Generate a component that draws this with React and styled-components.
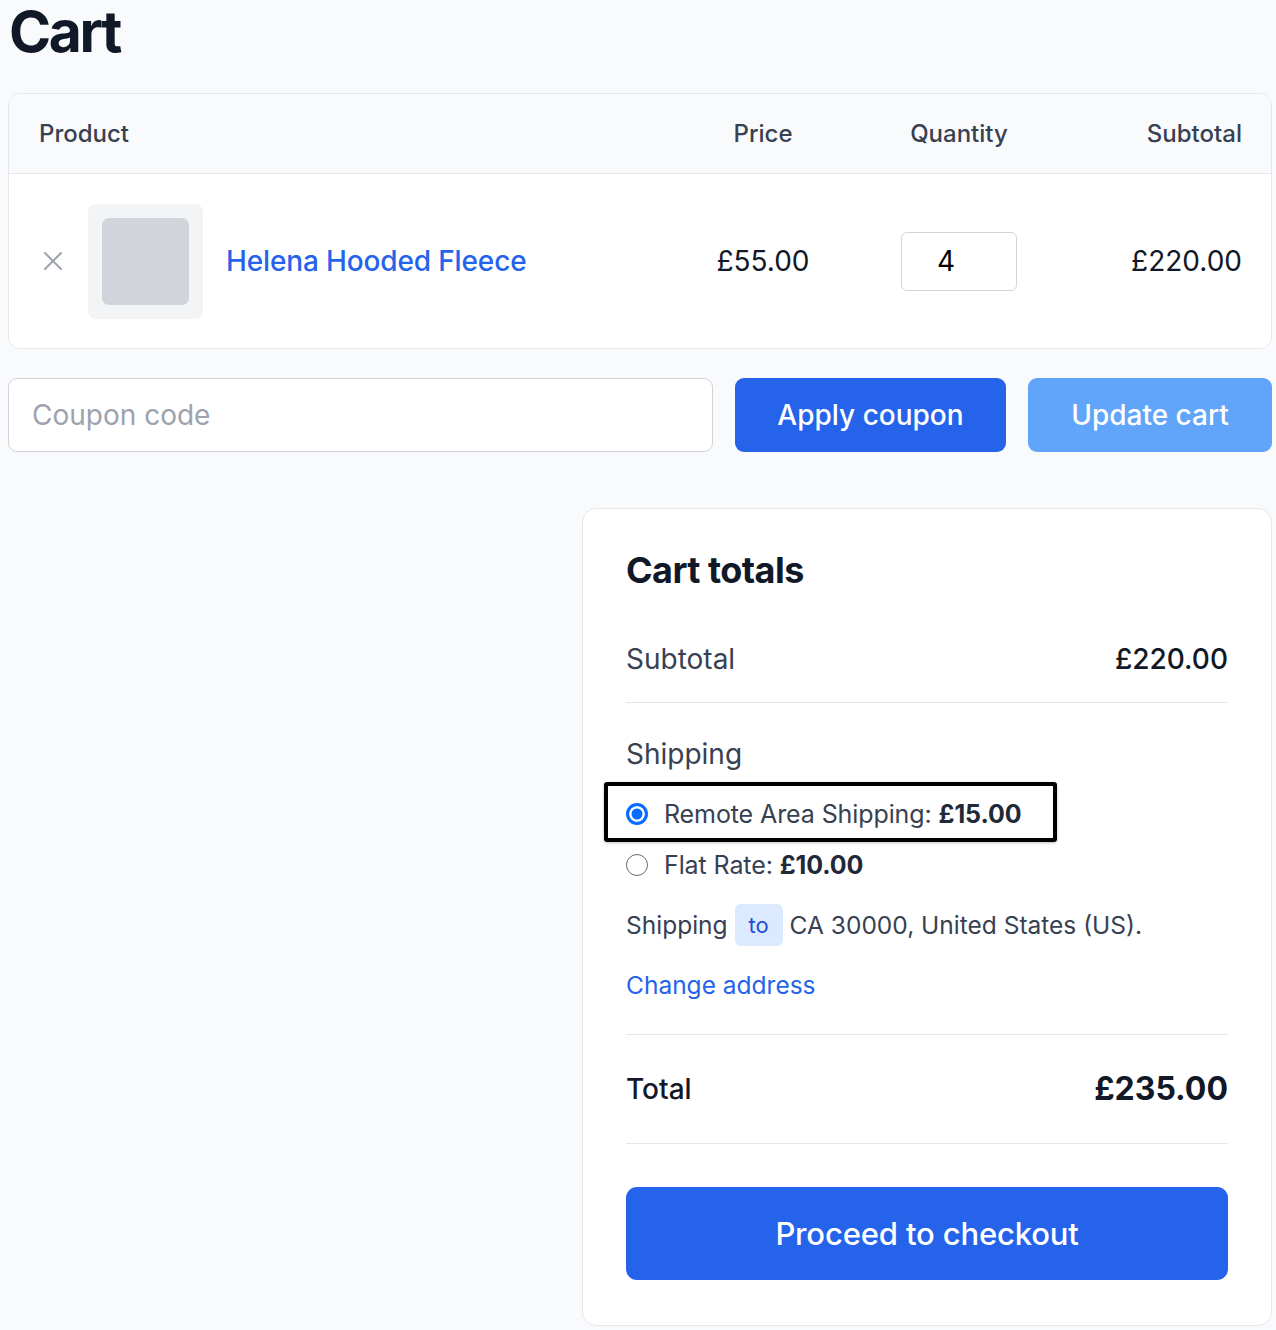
import React from "react";
import styled, { createGlobalStyle } from "styled-components";

const Global = createGlobalStyle`
  html, body { margin: 0; padding: 0; background: #f9fafb; }
  body { font-family: Inter, "Noto Sans", sans-serif; color: #111827; -webkit-font-smoothing: antialiased; }
  * { box-sizing: border-box; }
`;

const Page = styled.div`
  padding: 0 4px 0 8px;
  width: 1276px;
`;

const Title = styled.h1`
  margin: 0;
  font-size: 57px;
  line-height: 64px;
  font-weight: 700;
  letter-spacing: -0.042em;
  color: #111827;
  padding-left: 1px;
`;

const TableCard = styled.div`
  margin-top: 29px;
  background: #fff;
  border: 1px solid #e5e7eb;
  border-radius: 12px;
  overflow: hidden;
`;

const Row = styled.div`
  display: grid;
  grid-template-columns: 1fr 160px 232px 167px;
  align-items: center;
  padding: 0 29px 0 30px;
  height: ${(p) => p.$h}px;
  background: ${(p) => p.$bg || "#fff"};
  border-bottom: ${(p) => (p.$divider ? "1px solid #e5e7eb" : "none")};
`;

const HeadCell = styled.div`
  font-size: 24px;
  font-weight: 500;
  color: #374151;
  text-align: ${(p) => p.$align || "left"};
`;

const ProductCell = styled.div`
  display: flex;
  align-items: center;
`;

const RemoveBtn = styled.button`
  width: 28px;
  height: 28px;
  margin-right: 21px;
  padding: 0;
  border: 0;
  background: none;
  display: flex;
  align-items: center;
  justify-content: center;
  color: #9ca3af;
`;

const Thumb = styled.div`
  width: 115px;
  height: 115px;
  border-radius: 8px;
  background: #f3f4f6;
  display: flex;
  align-items: center;
  justify-content: center;
  margin-right: 23px;
`;

const ThumbInner = styled.div`
  width: 87px;
  height: 87px;
  border-radius: 7px;
  background: #d1d5db;
`;

const ProductLink = styled.a`
  font-size: 28px;
  font-weight: 500;
  color: #2563eb;
  text-decoration: none;
  letter-spacing: -0.005em;
`;

const Amount = styled.div`
  font-size: 28px;
  color: #111827;
  text-align: ${(p) => p.$align || "center"};
`;

const QtyWrap = styled.div`
  display: flex;
  justify-content: center;
`;

const QtyInput = styled.div`
  width: 116px;
  height: 59px;
  border: 1px solid #d1d5db;
  border-radius: 6px;
  background: #fff;
  display: flex;
  align-items: center;
  padding-left: 35px;
  font-size: 28px;
  color: #000;
`;

const CouponRow = styled.div`
  margin-top: 29px;
  display: flex;
  gap: 22px;
  height: 74px;
`;

const CouponInput = styled.div`
  flex: 1;
  border: 1px solid #d1d5db;
  border-radius: 9px;
  background: #fff;
  display: flex;
  align-items: center;
  padding-left: 23px;
  font-size: 28px;
  color: #9ca3af;
`;

const Button = styled.button`
  width: ${(p) => p.$w};
  height: ${(p) => p.$h || 74}px;
  border: 0;
  border-radius: ${(p) => p.$r || 9}px;
  background: ${(p) => (p.$light ? "#60a5fa" : "#2563eb")};
  color: #fff;
  font-family: Inter, sans-serif;
  font-size: ${(p) => p.$fs || 28}px;
  font-weight: 500;
  letter-spacing: ${(p) => p.$ls || "0"};
  padding: 0;
`;

const TotalsWrap = styled.div`
  display: flex;
  justify-content: flex-end;
  margin-top: 56px;
`;

const TotalsCard = styled.div`
  width: 690px;
  background: #fff;
  border: 1px solid #e5e7eb;
  border-radius: 14px;
  padding: 39px 43px 45px 43px;
`;

const TotalsTitle = styled.h2`
  margin: 0;
  font-size: 36px;
  line-height: 44px;
  font-weight: 700;
  letter-spacing: -0.015em;
  color: #111827;
`;

const SumRow = styled.div`
  display: flex;
  justify-content: space-between;
  align-items: center;
  border-bottom: 1px solid #e5e7eb;
  padding: ${(p) => p.$pad || "0"};
  height: ${(p) => (p.$h ? p.$h + "px" : "auto")};
`;

const SumLabel = styled.span`
  font-size: 28px;
  line-height: 28px;
  color: ${(p) => (p.$strong ? "#111827" : "#374151")};
  font-weight: ${(p) => (p.$strong ? 500 : 400)};
`;

const SumValue = styled.span`
  font-size: ${(p) => p.$fs || 28}px;
  line-height: 28px;
  font-weight: ${(p) => p.$w || 500};
  color: #111827;
`;

const ShipSection = styled.div`
  padding: 34px 0 31px;
  border-bottom: 1px solid #e5e7eb;
`;

const ShipLabel = styled.div`
  font-size: 28px;
  line-height: 34px;
  color: #374151;
`;

const Options = styled.div`
  margin-top: 11px;
  display: flex;
  flex-direction: column;
`;

const Option = styled.label`
  display: flex;
  align-items: center;
  gap: 16px;
  height: ${(p) => (p.$focus ? 60 : 46)}px;
  margin-left: -22px;
  padding-left: ${(p) => (p.$focus ? 18 : 22)}px;
  padding-top: ${(p) => (p.$focus ? 3 : 0)}px;
  width: ${(p) => (p.$focus ? "453px" : "auto")};
  border: ${(p) => (p.$focus ? "4px solid #000" : "none")};
  border-radius: 3px;
  box-shadow: ${(p) => (p.$focus ? "0 1px 3px rgba(0,0,0,0.25)" : "none")};
  font-size: 25px;
  letter-spacing: -0.004em;
  color: #374151;
  b { font-weight: 700; color: #1f2937; }
`;

const Radio = styled.span`
  width: 22px;
  height: 22px;
  flex: none;
  border-radius: 50%;
  ${(p) =>
    p.$checked
      ? `background: #0a6cff; border: 3px solid #0a6cff; box-shadow: inset 0 0 0 2.5px #fff;`
      : `background: #fff; border: 1.5px solid #6b6b6b;`}
`;

const AddressLine = styled.div`
  margin-top: 16px;
  display: flex;
  align-items: center;
  gap: 7px;
  height: 42px;
  font-size: 24.5px;
  color: #374151;
`;

const ToBadge = styled.span`
  display: inline-flex;
  align-items: center;
  justify-content: center;
  width: 48px;
  height: 42px;
  border-radius: 6px;
  background: #dbeafe;
  color: #1d4ed8;
  font-size: 22px;
`;

const ChangeLink = styled.a`
  display: block;
  margin-top: 21px;
  font-size: 24.5px;
  line-height: 36px;
  color: #2563eb;
  text-decoration: none;
`;

const CheckoutWrap = styled.div`
  margin-top: 43px;
`;

const XIcon = () => (
  <svg width="20" height="20" viewBox="0 0 20 20" fill="none">
    <path d="M2 2L18 18M18 2L2 18" stroke="currentColor" strokeWidth="2" strokeLinecap="round" />
  </svg>
);

export default function App() {
  return (
    <>
      <Global />
      <Page>
        <Title>Cart</Title>
        <TableCard>
          <Row $h={80} $bg="#f9fafb" $divider>
            <HeadCell>Product</HeadCell>
            <HeadCell $align="center">Price</HeadCell>
            <HeadCell $align="center">Quantity</HeadCell>
            <HeadCell $align="right">Subtotal</HeadCell>
          </Row>
          <Row $h={174}>
            <ProductCell>
              <RemoveBtn aria-label="Remove">
                <XIcon />
              </RemoveBtn>
              <Thumb>
                <ThumbInner />
              </Thumb>
              <ProductLink href="#">Helena Hooded Fleece</ProductLink>
            </ProductCell>
            <Amount>£55.00</Amount>
            <QtyWrap>
              <QtyInput>4</QtyInput>
            </QtyWrap>
            <Amount $align="right">£220.00</Amount>
          </Row>
        </TableCard>

        <CouponRow>
          <CouponInput>Coupon code</CouponInput>
          <Button $w="271px">Apply coupon</Button>
          <Button $w="244px" $light>Update cart</Button>
        </CouponRow>

        <TotalsWrap>
          <TotalsCard>
            <TotalsTitle>Cart totals</TotalsTitle>
            <SumRow $pad="53px 0 29px">
              <SumLabel>Subtotal</SumLabel>
              <SumValue>£220.00</SumValue>
            </SumRow>
            <ShipSection>
              <ShipLabel>Shipping</ShipLabel>
              <Options>
                <Option $focus>
                  <Radio $checked />
                  <span>
                    Remote Area Shipping: <b>£15.00</b>
                  </span>
                </Option>
                <Option>
                  <Radio />
                  <span>
                    Flat Rate: <b>£10.00</b>
                  </span>
                </Option>
              </Options>
              <AddressLine>
                <span>Shipping</span>
                <ToBadge>to</ToBadge>
                <span>CA 30000, United States (US).</span>
              </AddressLine>
              <ChangeLink href="#">Change address</ChangeLink>
            </ShipSection>
            <SumRow $h={109}>
              <SumLabel $strong>Total</SumLabel>
              <SumValue $fs={32} $w={700}>£235.00</SumValue>
            </SumRow>
            <CheckoutWrap>
              <Button $w="100%" $h={93} $r={11} $fs={31} $ls="-0.005em">
                Proceed to checkout
              </Button>
            </CheckoutWrap>
          </TotalsCard>
        </TotalsWrap>
      </Page>
    </>
  );
}
